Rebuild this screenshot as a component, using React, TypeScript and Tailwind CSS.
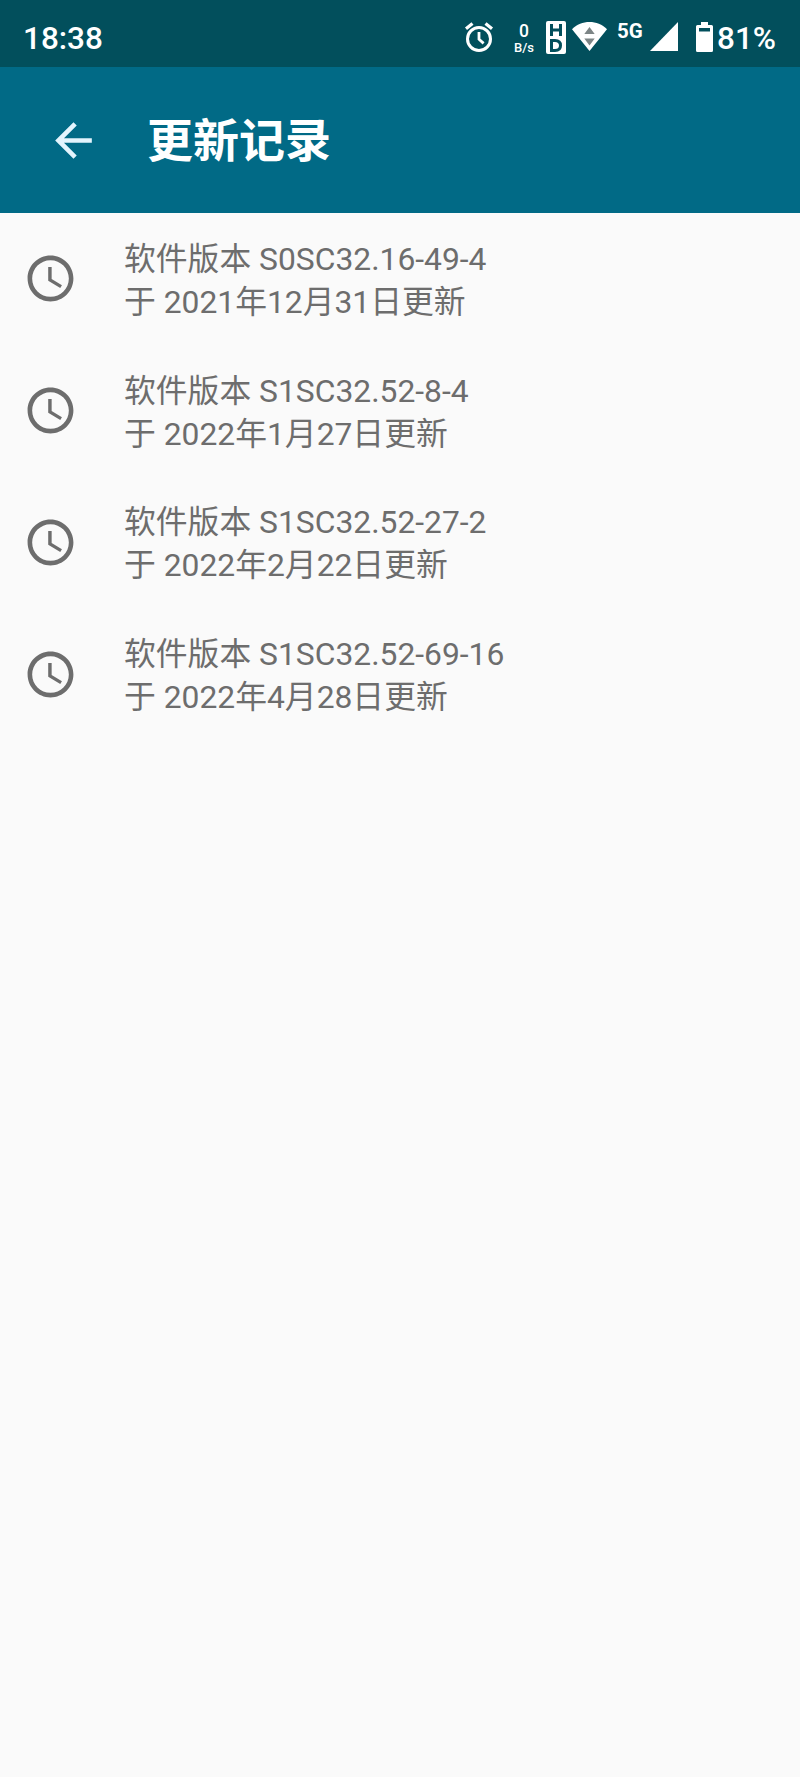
const updates = [
  { version: 'S0SC32.16-49-4', date: '2021年12月31日' },
  { version: 'S1SC32.52-8-4', date: '2022年1月27日' },
  { version: 'S1SC32.52-27-2', date: '2022年2月22日' },
  { version: 'S1SC32.52-69-16', date: '2022年4月28日' },
];

/* ─── Icons ──────────────────────────────────────────────────────────── */
function AlarmIcon() {
  return (
    <svg className="h-8 w-[30px]" viewBox="0 0 30 32" fill="none" stroke="currentColor">
      <circle cx="15" cy="18" r="11.5" strokeWidth="3" />
      <path d="M15 11v7.200l4.600 4.200" strokeWidth="2.800" />
      <path d="M2 7.800l6.500-5.400M28 7.800l-6.500-5.400" strokeWidth="3.200" />
    </svg>
  );
}

function HdIcon() {
  return (
    <svg className="h-[33px] w-5" viewBox="0 0 20 33">
      <rect width="20" height="33" rx="2" fill="currentColor" />
      <g fill="none" stroke="#024f5c" strokeWidth="3">
        <path d="M5.500 3v12M14.500 3v12M5.500 9h9" />
        <path d="M5.500 19.500h3.500c3.600 0 5.500 1.900 5.500 5s-1.900 5-5.500 5H5.500z" />
      </g>
    </svg>
  );
}

function WifiIcon() {
  return (
    <svg className="h-[29px] w-[35px]" viewBox="0 0 35 29">
      <path d="M17.500 29L0 7.200C4.800 2.500 11 0 17.500 0S30.200 2.500 35 7.200z" fill="currentColor" />
      <path d="M12.300 12L17.500 5l5.200 7zM12.300 16.500h10.400l-5.200 7z" fill="#7d8586" />
    </svg>
  );
}

function SignalIcon() {
  return (
    <svg className="h-[29px] w-7" viewBox="0 0 28 29" fill="currentColor">
      <path d="M28 0v29H0z" />
    </svg>
  );
}

function BatteryIcon() {
  return (
    <svg className="h-[30px] w-[17px]" viewBox="0 0 17 30" fill="currentColor" fillRule="evenodd">
      <path d="M5 0h7v3h3.500a1.500 1.500 0 0 1 1.500 1.500v24a1.500 1.500 0 0 1-1.500 1.500h-14A1.500 1.500 0 0 1 0 28.500v-24A1.500 1.500 0 0 1 1.500 3H5zM3 6v3.500h11V6z" />
    </svg>
  );
}

function BackIcon() {
  return (
    <svg className="size-[55px]" viewBox="0 0 24 24" fill="currentColor">
      <path d="M20 11H7.830l5.590-5.590L12 4l-8 8 8 8 1.410-1.410L7.830 13H20v-2z" />
    </svg>
  );
}

function ClockIcon() {
  return (
    <svg className="size-[55px]" viewBox="0 0 24 24" fill="currentColor">
      <path d="M11.990 2C6.470 2 2 6.480 2 12s4.470 10 9.990 10C17.520 22 22 17.520 22 12S17.520 2 11.990 2zM12 20c-4.420 0-8-3.580-8-8s3.580-8 8-8 8 3.580 8 8-3.580 8-8 8z" />
      <path d="M12.500 7H11v6l5.250 3.150.75-1.230-4.500-2.670z" />
    </svg>
  );
}

/* ─── Sections ───────────────────────────────────────────────────────── */
function StatusBar() {
  return (
    <div className="flex h-[67px] items-start bg-[#024f5c] pl-[23px] text-white">
      <span className="mt-[21px] w-[441px] text-[31.5px] leading-9 font-medium">18:38</span>
      <div className="mt-[21px] flex items-start">
        <AlarmIcon />
        <div className="ml-[18px] mt-px flex w-6 flex-col items-center font-medium">
          <span className="text-[17.5px] leading-[19px]">0</span>
          <span className="text-[13px] leading-[14px]">B/s</span>
        </div>
        <div className="ml-[10px]"><HdIcon /></div>
        <div className="ml-[6px] mt-[1px]"><WifiIcon /></div>
        <span className="ml-[10px] w-[27px] text-[20.5px] leading-5 font-bold">5G</span>
        <div className="ml-[6px] mt-[1px]"><SignalIcon /></div>
        <div className="ml-[18px] mt-[1px]"><BatteryIcon /></div>
        <span className="ml-1 text-[31.5px] leading-9 font-medium">81%</span>
      </div>
    </div>
  );
}

function AppBar() {
  return (
    <header className="flex h-[146px] items-center bg-[#016a86] pl-[46px] text-white">
      <button type="button" aria-label="返回" className="text-[#e3f4fd]">
        <BackIcon />
      </button>
      <h1 className="ml-[46px] pt-[2px] text-[46px] leading-none font-bold">更新记录</h1>
    </header>
  );
}

export default function App() {
  return (
    <div className="min-h-[1777px] w-[800px] overflow-hidden bg-[#fafafa] font-[Roboto,'Noto_Sans_CJK_SC',sans-serif]">
      <StatusBar />
      <AppBar />
      <ul className="text-[#6d6d6d]">
        {updates.map(({ version, date }) => (
          <li key={version} className="flex h-[131.8px] items-center pl-[23px]">
            <ClockIcon />
            <div className="ml-[46px] pt-[4px] text-[31.8px] leading-[43px]">
              <p>软件版本 {version}</p>
              <p>于 {date}更新</p>
            </div>
          </li>
        ))}
      </ul>
    </div>
  );
}
